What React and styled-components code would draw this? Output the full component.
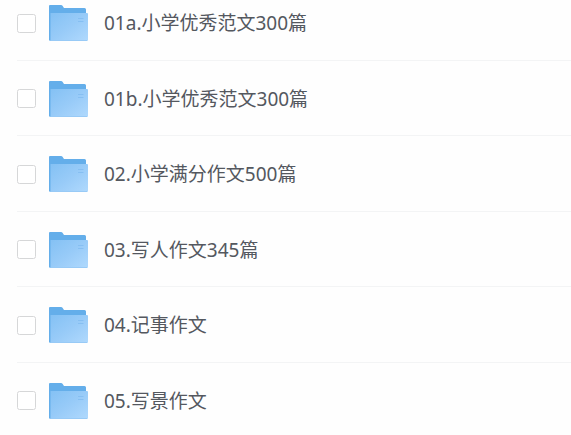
import React, { useState } from "react";
import styled, { createGlobalStyle } from "styled-components";

const GlobalStyle = createGlobalStyle`
  body {
    margin: 0;
    background-color: #fefefe;
    overflow: hidden;
  }
`;

const FileList = styled.ul`
  height: 435px;
  margin: 0;
  padding: 0 0 0 17px;
  box-sizing: border-box;
  overflow: hidden;
  list-style: none;
`;

const FileRow = styled.li`
  display: flex;
  align-items: center;
  height: 75.5px;
  padding-top: 1.2px;
  box-sizing: border-box;
  border-bottom: 1px solid #f3f4f5;

  &:first-child {
    margin-top: -14.6px;
  }
`;

const Checkbox = styled.input`
  appearance: none;
  flex: none;
  width: 19px;
  height: 19px;
  margin: 0 12px 0 0;
  box-sizing: border-box;
  border: 1px solid #d6d7d8;
  border-radius: 2.5px;
  background-color: #fff;

  &:checked {
    background-color: #63aeea;
  }
`;

const Icon = styled.svg`
  flex: none;
  display: block;
  width: 41px;
  height: 38px;
  margin-right: 15px;
`;

const FileName = styled.span`
  color: #54585f;
  font-family: "Noto Sans", "Noto Sans CJK SC", sans-serif;
  font-size: 19px;
  line-height: 28px;
  white-space: nowrap;
`;

const files = [
  "01a.小学优秀范文300篇",
  "01b.小学优秀范文300篇",
  "02.小学满分作文500篇",
  "03.写人作文345篇",
  "04.记事作文",
  "05.写景作文",
];

const FolderIcon = () => (
  <Icon viewBox="0 0 41 38">
    <defs>
      <linearGradient id="folderFront" x1="0" y1="0" x2="1" y2="1">
        <stop offset="0" stopColor="#84c1f4" />
        <stop offset="0.5" stopColor="#98cbf8" />
        <stop offset="1" stopColor="#b0d9fd" />
      </linearGradient>
    </defs>
    <path
      d="M2 1H13q1 0 1.5.8L16 4h20.5q1.5 0 1.5 1.5V36.7H2Q1 36.7 1 36V2Q1 1 2 1Z"
      fill="#64aeea"
    />
    <path
      d="M3 9h36q1 0 1 1v26q0 1-1 1H3q-.5 0-.5-1V9Z"
      fill="url(#folderFront)"
    />
    <path d="M3 36.5h36" stroke="#98caf6" strokeWidth="1" />
    <path d="M30 14.5h5.5M30 17.5h5.5" stroke="#86bff2" strokeWidth="1" />
  </Icon>
);

const App = () => {
  const [selected, setSelected] = useState([]);

  const handleToggle = (name) => {
    setSelected(
      selected.includes(name)
        ? selected.filter((item) => item !== name)
        : [...selected, name]
    );
  };

  return (
    <>
      <GlobalStyle />
      <FileList>
        {files.map((name) => (
          <FileRow key={name}>
            <Checkbox
              type="checkbox"
              checked={selected.includes(name)}
              onChange={() => handleToggle(name)}
            />
            <FolderIcon />
            <FileName>{name}</FileName>
          </FileRow>
        ))}
      </FileList>
    </>
  );
};

export default App;
